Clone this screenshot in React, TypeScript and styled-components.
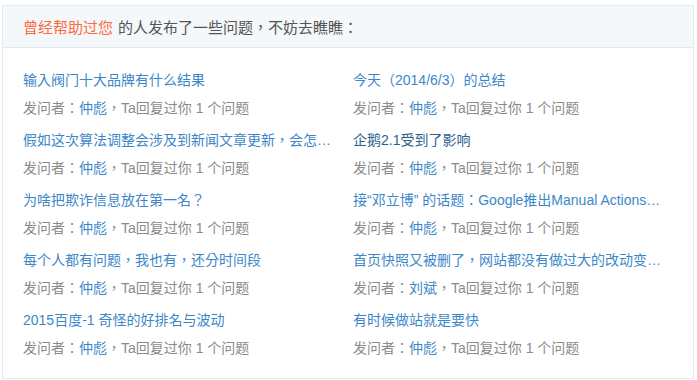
import React from 'react';
import styled, { createGlobalStyle } from 'styled-components';

const GlobalStyle = createGlobalStyle`
  body {
    margin: 0;
    background: #fff;
    font-family: "Liberation Sans", Arial, "Noto Sans CJK TC", sans-serif;
  }
`;

const Panel = styled.div`
  margin: 5px 0 0 2px;
  width: 692px;
  height: 374px;
  box-sizing: border-box;
  border: 1px solid #e6eaef;
  display: flex;
  flex-direction: column;
`;

const Header = styled.div`
  height: 42px;
  box-sizing: border-box;
  background: #f4f8fb;
  border-bottom: 1px solid #e3e8ee;
  display: flex;
  align-items: center;
  padding-left: 20px;
  font-size: 15px;
  color: #555;
`;

const Highlight = styled.span`
  color: #ff6a3d;
  margin-right: 5px;
`;

const Grid = styled.div`
  display: grid;
  grid-template-columns: 330px 330px;
  padding: 19px 0 0 20px;
`;

const Item = styled.div`
  display: flex;
  flex-direction: column;
  margin-bottom: 4px;
`;

const Title = styled.a<{ $visited?: boolean }>`
  display: block;
  height: 28px;
  line-height: 27px;
  max-width: 309px;
  font-size: 14px;
  color: ${(p) => (p.$visited ? '#2d5f91' : '#3d87c9')};
  text-decoration: none;
  white-space: nowrap;
  overflow: hidden;
  text-overflow: ellipsis;
  cursor: pointer;
`;

const Meta = styled.div`
  height: 28px;
  line-height: 27px;
  font-size: 14px;
  color: #8a8a8a;
  white-space: nowrap;
`;

const Name = styled.a`
  color: #3d87c9;
  text-decoration: none;
`;

interface Question {
  title: string;
  author: string;
  visited?: boolean;
}

const questions: Question[] = [
  { title: '输入阀门十大品牌有什么结果', author: '仲彪' },
  { title: '今天（2014/6/3）的总结', author: '仲彪' },
  { title: '假如这次算法调整会涉及到新闻文章更新，会怎么样呢', author: '仲彪' },
  { title: '企鹅2.1受到了影响', author: '仲彪', visited: true },
  { title: '为啥把欺诈信息放在第一名？', author: '仲彪' },
  { title: '接“邓立博” 的话题：Google推出Manual Actions Viewer', author: '仲彪' },
  { title: '每个人都有问题，我也有，还分时间段', author: '仲彪' },
  { title: '首页快照又被删了，网站都没有做过大的改动变化呢？', author: '刘斌' },
  { title: '2015百度-1 奇怪的好排名与波动', author: '仲彪' },
  { title: '有时候做站就是要快', author: '仲彪' },
];

const App: React.FC = () => {
  return (
    <>
      <GlobalStyle />
      <Panel>
        <Header>
          <Highlight>曾经帮助过您</Highlight>
          的人发布了一些问题，不妨去瞧瞧：
        </Header>
        <Grid>
          {questions.map((q, i) => (
            <Item key={i}>
              <Title $visited={q.visited}>{q.title}</Title>
              <Meta>
                发问者：<Name>{q.author}</Name>，Ta回复过你 1 个问题
              </Meta>
            </Item>
          ))}
        </Grid>
      </Panel>
    </>
  );
};

export default App;
